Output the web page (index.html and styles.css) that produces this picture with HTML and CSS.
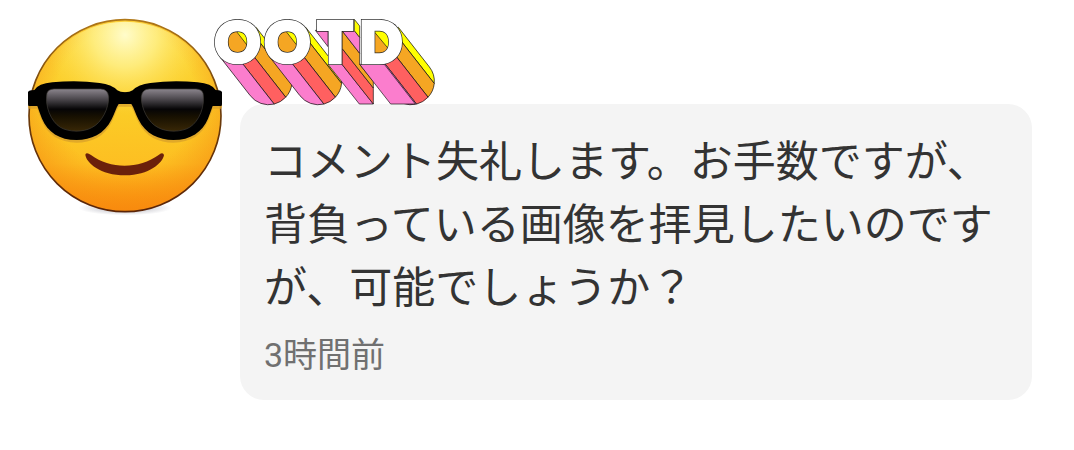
FILE: index.html
```html
<!DOCTYPE html>
<html lang="ja">
<head>
    <meta charset="UTF-8">
    <meta name="viewport" content="width=device-width, initial-scale=1.0">
    <title>コメント</title>
    <link rel="stylesheet" href="styles.css">
</head>
<body>
    <article class="comment">
        <svg class="avatar" viewBox="39 24 582 600" aria-hidden="true">
            <defs>
                <linearGradient id="face" x1="0" y1="0" x2="0" y2="1">
                    <stop offset="0" stop-color="#fdd83c"/>
                    <stop offset="0.5" stop-color="#fbcb26"/>
                    <stop offset="0.75" stop-color="#fdbf22"/>
                    <stop offset="1" stop-color="#fb8a0a"/>
                </linearGradient>
                <radialGradient id="shade" gradientUnits="userSpaceOnUse" cx="330" cy="270" r="350">
                    <stop offset="0.6" stop-color="#f68a10" stop-opacity="0"/>
                    <stop offset="1" stop-color="#f68a10" stop-opacity="0.7"/>
                </radialGradient>
                <radialGradient id="shine" gradientUnits="userSpaceOnUse" cx="330" cy="75" r="240">
                    <stop offset="0" stop-color="#fffccb"/>
                    <stop offset="0.4" stop-color="#fff493" stop-opacity="0.75"/>
                    <stop offset="1" stop-color="#fde14c" stop-opacity="0"/>
                </radialGradient>
                <linearGradient id="rim" x1="0" y1="0" x2="0" y2="1">
                    <stop offset="0" stop-color="#b07818"/>
                    <stop offset="0.4" stop-color="#70400c"/>
                    <stop offset="1" stop-color="#5a2407"/>
                </linearGradient>
                <linearGradient id="lens" x1="0" y1="0" x2="0" y2="1">
                    <stop offset="0" stop-color="#8b858d"/>
                    <stop offset="0.25" stop-color="#49454a"/>
                    <stop offset="0.48" stop-color="#060506"/>
                    <stop offset="0.65" stop-color="#171001"/>
                    <stop offset="1" stop-color="#382706"/>
                </linearGradient>
                <radialGradient id="ground">
                    <stop offset="0.5" stop-color="#777788" stop-opacity="0.3"/>
                    <stop offset="1" stop-color="#777788" stop-opacity="0"/>
                </radialGradient>
                <path id="frame" d="M39 246Q41 240 58 240Q70 221 112 217Q186 209 254 219Q290 223 307 241Q315 247 331 247V282H311C303 294 298 312 290 328C268 373 228 390 185 390C133 390 98 366 81 326Q73 306 67 288H41Q39 286 39 282Z"/>
                <path id="glass" d="M96 250Q99 238 117 237H257Q279 238 281 260C282 295 260 339 230 353C205 367 161 367 136 352C107 334 89 287 96 250Z"/>
            </defs>
            <ellipse cx="330" cy="594" rx="140" ry="22" fill="url(#ground)"/>
            <circle cx="330" cy="317" r="288" fill="url(#face)"/>
            <circle cx="330" cy="317" r="288" fill="url(#shade)"/>
            <circle cx="330" cy="317" r="282" fill="url(#shine)"/>
            <circle cx="330" cy="317" r="288" fill="none" stroke="url(#rim)" stroke-width="5"/>
            <g fill="#d8a02a" opacity="0.75" transform="translate(0 8)">
                <use href="#frame"/>
                <use href="#frame" transform="matrix(-1 0 0 1 660 0)"/>
            </g>
            <g fill="#000">
                <use href="#frame"/>
                <use href="#frame" transform="matrix(-1 0 0 1 660 0)"/>
            </g>
            <g fill="url(#lens)" stroke="#403d38" stroke-width="2">
                <use href="#glass"/>
                <use href="#glass" transform="matrix(-1 0 0 1 660 0)"/>
            </g>
            <path d="M211 434Q214 425 228 435C286 478 372 478 432 434Q444 425 447 435C444 458 402 496 331 496C255 496 214 458 211 434Z" fill="#6b200b"/>
        </svg>

        <div class="content">
            <svg class="badge" viewBox="24 24 672 270" role="img" aria-label="OOTD">
                <defs>
                    <g id="beam" transform="rotate(52)">
                        <path class="yellow" d="M0-70H151A70 70 0 0 1 199-51H0Z"/>
                        <path class="orange" d="M0-51H199A70 70 0 0 1 220-11H0Z"/>
                        <path class="red" d="M0-11H220A70 70 0 0 1 215 29H0Z"/>
                        <path class="pink" d="M0 29H215A70 70 0 0 1 151 70H0Z"/>
                    </g>
                    <g id="hole">
                        <circle class="orange" r="40"/>
                        <path class="yellow" d="M-14-44L34 18L40 0L30-40Z"/>
                    </g>
                </defs>
                <g class="sides">
                    <use href="#beam" x="98" y="101"/>
                    <use href="#hole" x="98" y="101"/>
                    <use href="#beam" x="247" y="101"/>
                    <use href="#hole" x="247" y="101"/>
                    <!-- T -->
                    <path class="pink" d="M331 67H369V116Z"/>
                    <path class="pink" d="M369 169L463 288H505L411 169Z"/>
                    <path class="red" d="M411 121L505 240V288L411 169Z"/>
                    <path class="orange" d="M411 68L464 136V169L505 221V240L411 121Z"/>
                    <path class="pink" d="M411 68H448L464 88V136Z"/>
                    <path class="yellow" d="M448 34L464 54V88L448 68Z"/>
                    <!-- D -->
                    <use href="#beam" x="525" y="101"/>
                    <path class="pink" d="M464 169L557 288H631L538 169Z"/>
                    <path class="orange" d="M490 50H570V150H490Z"/>
                    <path class="yellow" d="M490 50L560 134L570 120V50Z"/>
                </g>
                <g class="letters outline">
                    <text x="98" y="162">O</text>
                    <text x="247" y="162">O</text>
                    <text x="390" y="162">T</text>
                    <text x="527" y="162">D</text>
                </g>
                <g class="letters">
                    <text x="98" y="162">O</text>
                    <text x="247" y="162">O</text>
                    <text x="390" y="162">T</text>
                    <text x="527" y="162">D</text>
                </g>
            </svg>

            <div class="bubble">
                <p class="text">コメント失礼します。お手数ですが、背負っている画像を拝見したいのですが、可能でしょうか？</p>
                <time class="time">3時間前</time>
            </div>
        </div>
    </article>
</body>
</html>
```
FILE: styles.css
```css
body {
    margin: 0;
    background-color: #fff;
    font-family: Roboto, "Noto Sans CJK JP", sans-serif;
}
.comment {
    display: flex;
    align-items: flex-start;
    gap: 18px;
    padding: 16px 42px 50px 28px;
}
.avatar {
    flex: none;
    width: 194px;
    height: 200px;
    margin-top: 2px;
}
.content {
    flex: 1;
    min-width: 0;
}
/* the badge hangs over the avatar and the top of the bubble */
.badge {
    display: block;
    position: relative;
    width: 224px;
    height: 90px;
    margin: 0 0 -2px -27px;
    overflow: visible;
}
.sides {
    stroke: #111;
    stroke-width: 2;
    stroke-linejoin: round;
}
.yellow {
    fill: #ffff00;
}
.orange {
    fill: #f5a623;
}
.red {
    fill: #ff6060;
}
.pink {
    fill: #fb7dcd;
}
.letters {
    fill: #fff;
    stroke: #fff;
    stroke-width: 14;
    font-family: Lato, sans-serif;
    font-size: 165px;
    font-weight: 900;
    text-anchor: middle;
}
.outline {
    fill: #222;
    stroke: #222;
    stroke-width: 18;
}
.bubble {
    padding: 27px 24px 24px;
    border-radius: 24px;
    background-color: #f4f4f4;
}
.text {
    margin: 0;
    color: #333;
    font-size: 43px;
    line-height: 63px;
}
.time {
    display: block;
    margin-top: 14px;
    color: #707070;
    font-size: 34px;
    line-height: 42px;
}
```
